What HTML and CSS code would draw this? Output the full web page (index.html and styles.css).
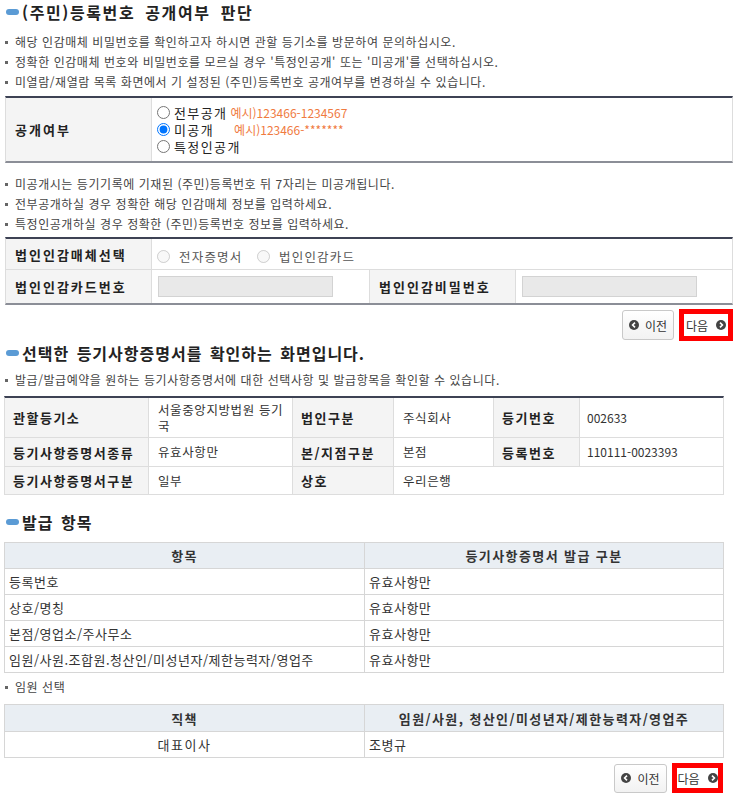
FILE: index.html
```html
<!DOCTYPE html>
<html lang="ko">
<head>
<meta charset="utf-8">
<title>등록번호 공개여부</title>
<link rel="stylesheet" href="styles.css">
</head>
<body>
<h2 class="title t1"><span class="pill"></span>(주민)등록번호 공개여부 판단</h2>
<ul class="notes n1">
  <li>해당 인감매체 비밀번호를 확인하고자 하시면 관할 등기소를 방문하여 문의하십시오.</li>
  <li>정확한 인감매체 번호와 비밀번호를 모르실 경우 '특정인공개' 또는 '미공개'를 선택하십시오.</li>
  <li>미열람/재열람 목록 화면에서 기 설정된 (주민)등록번호 공개여부를 변경하실 수 있습니다.</li>
</ul>
<table class="form f1">
  <colgroup><col class="c146"><col></colgroup>
  <tr class="r63">
    <th>공개여부</th>
    <td class="radios">
      <label class="rline"><input type="radio" name="open">전부공개<span class="ex ex1">예시)123466-1234567</span></label>
      <label class="rline"><input type="radio" name="open" checked>미공개<span class="ex ex2">예시)123466-*******</span></label>
      <label class="rline"><input type="radio" name="open">특정인공개</label>
    </td>
  </tr>
</table>
<ul class="notes n2">
  <li>미공개시는 등기기록에 기재된 (주민)등록번호 뒤 7자리는 미공개됩니다.</li>
  <li>전부공개하실 경우 정확한 해당 인감매체 정보를 입력하세요.</li>
  <li>특정인공개하실 경우 정확한 (주민)등록번호 정보를 입력하세요.</li>
</ul>
<table class="form f2">
  <colgroup><col class="c146"><col class="c217"><col class="c147"><col></colgroup>
  <tr class="r31">
    <th>법인인감매체선택</th>
    <td colspan="3" class="dis">
      <label class="dline"><input type="radio" name="media" disabled>전자증명서</label>
      <label class="dline"><input type="radio" name="media" disabled>법인인감카드</label>
    </td>
  </tr>
  <tr class="r33">
    <th>법인인감카드번호</th>
    <td><input type="text" class="field" disabled></td>
    <th class="bl">법인인감비밀번호</th>
    <td><input type="text" class="field" disabled></td>
  </tr>
</table>
<div class="btns b1">
  <span class="btn prev"><svg width="10" height="10" viewBox="0 0 10 10"><circle cx="5" cy="5" r="5" fill="#444"/><polyline points="6,2.6 3.6,5 6,7.4" fill="none" stroke="#fff" stroke-width="1.6"/></svg>이전</span>
  <span class="btn next">다음<svg width="10" height="10" viewBox="0 0 10 10"><circle cx="5" cy="5" r="5" fill="#444"/><polyline points="4,2.6 6.4,5 4,7.4" fill="none" stroke="#fff" stroke-width="1.6"/></svg></span>
</div>

<h2 class="title t2"><span class="pill"></span>선택한 등기사항증명서를 확인하는 화면입니다.</h2>
<ul class="notes n3">
  <li>발급/발급예약을 원하는 등기사항증명서에 대한 선택사항 및 발급항목을 확인할 수 있습니다.</li>
</ul>
<table class="info">
  <colgroup><col class="c144"><col class="c144"><col class="c101"><col class="c100"><col class="c86"><col></colgroup>
  <tr class="r40">
    <th>관할등기소</th><td>서울중앙지방법원 등기국</td>
    <th>법인구분</th><td>주식회사</td>
    <th>등기번호</th><td class="num">002633</td>
  </tr>
  <tr class="r29">
    <th>등기사항증명서종류</th><td>유효사항만</td>
    <th>본/지점구분</th><td>본점</td>
    <th>등록번호</th><td class="num">110111-0023393</td>
  </tr>
  <tr class="r28">
    <th>등기사항증명서구분</th><td>일부</td>
    <th>상호</th><td colspan="3">우리은행</td>
  </tr>
</table>

<h2 class="title t3"><span class="pill"></span>발급 항목</h2>
<table class="grid g1">
  <colgroup><col class="c360"><col></colgroup>
  <tr class="h26"><th>항목</th><th>등기사항증명서 발급 구분</th></tr>
  <tr class="h26"><td>등록번호</td><td>유효사항만</td></tr>
  <tr class="h26"><td>상호/명칭</td><td>유효사항만</td></tr>
  <tr class="h26"><td>본점/영업소/주사무소</td><td>유효사항만</td></tr>
  <tr class="h26"><td>임원/사원.조합원.청산인/미성년자/제한능력자/영업주</td><td>유효사항만</td></tr>
</table>
<ul class="notes n4">
  <li>임원 선택</li>
</ul>
<table class="grid g2">
  <colgroup><col class="c360"><col></colgroup>
  <tr class="h27"><th>직책</th><th>임원/사원, 청산인/미성년자/제한능력자/영업주</th></tr>
  <tr class="h26"><td class="center">대표이사</td><td>조병규</td></tr>
</table>
<div class="btns b2">
  <span class="btn prev"><svg width="10" height="10" viewBox="0 0 10 10"><circle cx="5" cy="5" r="5" fill="#444"/><polyline points="6,2.6 3.6,5 6,7.4" fill="none" stroke="#fff" stroke-width="1.6"/></svg>이전</span>
  <span class="btn next">다음<svg width="10" height="10" viewBox="0 0 10 10"><circle cx="5" cy="5" r="5" fill="#444"/><polyline points="4,2.6 6.4,5 4,7.4" fill="none" stroke="#fff" stroke-width="1.6"/></svg></span>
</div>
</body>
</html>
```

FILE: styles.css
```css
* { box-sizing: border-box; }
body {
  margin: 0;
  width: 738px;
  background: #fff;
  color: #333;
  font-family: "Noto Sans CJK KR", "Noto Sans", sans-serif;
}

/* section titles */
.title {
  display: flex;
  align-items: center;
  height: 22px;
  margin: 0;
  padding-left: 6px;
  font-size: 16px;
  font-weight: 700;
  color: #222;
  letter-spacing: 1px;
  word-spacing: 2px;
  white-space: nowrap;
}
.pill {
  flex: none;
  width: 13px;
  height: 6px;
  border-radius: 3px;
  background: #5b9bd5;
  margin-right: 3px;
}
.t1 { margin-top: 1px; letter-spacing: 1.6px; word-spacing: 4px; }
.t2 { margin-top: 1px; }
.t3 { margin-top: 16px; }

/* bullet notes */
.notes {
  list-style: none;
  margin: 0;
  padding: 0 0 0 5px;
  font-size: 12px;
  color: #444;
  letter-spacing: 0.55px;
}
.notes li {
  display: flex;
  align-items: center;
  height: 20px;
  line-height: 20px;
  white-space: nowrap;
}
.notes li::before {
  content: "";
  flex: none;
  width: 3px;
  height: 3px;
  background: #666;
  margin-right: 7px;
}
.n1 { margin-top: 9px; }
.n2 { margin-top: 11px; }
.n3 { margin-top: 6px; }
.n4 { margin-top: 4px; }

/* shared table */
table {
  border-collapse: separate;
  border-spacing: 0;
  table-layout: fixed;
}
th, td { padding: 0; }

.c146 { width: 146px; }
.c217 { width: 217px; }
.c147 { width: 147px; }
.c144 { width: 144px; }
.c101 { width: 101px; }
.c100 { width: 100px; }
.c86 { width: 86px; }
.c360 { width: 360px; }

.r63 { height: 63px; }
.r31 { height: 31px; }
.r33 { height: 33px; }
.r40 { height: 40px; }
.r29 { height: 29px; }
.r28 { height: 28px; }
.h26 { height: 26px; }
.h27 { height: 27px; }

/* form tables */
.form {
  width: 728px;
  margin-left: 5px;
  border-top: 2px solid #3d4254;
  border-bottom: 2px solid #8b8e97;
  border-left: 1px solid #ddd;
  border-right: 1px solid #ddd;
}
.f1 { margin-top: 4px; }
.f2 { margin-top: 3px; }
.form th {
  background: #f4f4f4;
  text-align: left;
  font-size: 13px;
  font-weight: 700;
  letter-spacing: 2px;
  color: #222;
  padding-left: 9px;
  border-right: 1px solid #ddd;
  white-space: nowrap;
}
.form th.bl { border-left: 1px solid #ddd; }
.form td { padding-left: 5px; }
.f2 .r31 th, .f2 .r31 td { border-bottom: 1px solid #ddd; }

.rline {
  display: flex;
  align-items: center;
  height: 17px;
  line-height: 17px;
  font-size: 13px;
  letter-spacing: 1.4px;
  color: #222;
  white-space: nowrap;
}
input[type="radio"] {
  width: 13px;
  height: 13px;
  margin: 0 4px 0 0;
  flex: none;
}
.ex {
  font-size: 12px;
  line-height: 17px;
  color: #f07b3f;
  letter-spacing: 0;
}
.ex1 { margin-left: 3px; }
.ex2 { margin-left: 20px; }

.dis { padding-left: 6px; }
.dline {
  display: inline-flex;
  align-items: center;
  font-size: 12.5px;
  color: #555;
  letter-spacing: 1.2px;
  margin-right: 10px;
  vertical-align: middle;
}
.dline input[type="radio"] { margin-right: 9px; }

.field {
  display: block;
  width: 175px;
  height: 21px;
  margin-left: 1px;
  background: #e9e9e9;
  border: 1px solid #d3d3d3;
}

/* buttons */
.btns {
  display: flex;
  justify-content: flex-end;
  align-items: center;
  gap: 5px;
  height: 32px;
}
.b1 { margin-top: 4px; padding-right: 5px; }
.b2 { margin-top: 5px; padding-right: 15px; height: 30px; }
.btn {
  display: flex;
  align-items: center;
  justify-content: center;
  gap: 6px;
  height: 30px;
  font-size: 12px;
  color: #333;
  background: linear-gradient(#fff, #f2f2f2);
  border: 1px solid #c9c9c9;
  border-radius: 3px;
}
.prev { width: 52px; }
.next {
  width: 54px;
  height: 32px;
  background: #fff;
  border: 5px solid #ff0000;
  border-radius: 0;
  gap: 8px;
}
.b2 .prev { width: 53px; height: 29px; }
.b2 .next { width: 51px; height: 30px; }

/* info table */
.info {
  width: 720px;
  margin: 6px 0 0 4px;
  border-top: 2px solid #3d4254;
  border-left: 1px solid #ddd;
  border-right: 1px solid #ddd;
}
.info th, .info td {
  border-bottom: 1px solid #ddd;
  border-right: 1px solid #ddd;
  font-size: 12.5px;
  text-align: left;
  vertical-align: middle;
}
.info th:last-child, .info td:last-child { border-right: none; }
.info th {
  background: #f4f4f4;
  font-size: 13px;
  font-weight: 700;
  letter-spacing: 1.5px;
  color: #222;
  padding-left: 8px;
  white-space: nowrap;
}
.info td {
  color: #333;
  padding: 0 6px 0 9px;
  line-height: 16px;
  letter-spacing: 0.6px;
}
.info td.num { padding-left: 7px; font-size: 12px; letter-spacing: 0; }

/* grid tables */
.grid {
  width: 720px;
  margin-left: 4px;
  border: 1px solid #d6d6d6;
  border-bottom: none;
}
.g1 { margin-top: 9px; }
.g2 { margin-top: 7px; }
.grid th, .grid td {
  border-bottom: 1px solid #d6d6d6;
  font-size: 13px;
  vertical-align: middle;
  white-space: nowrap;
}
.grid th:first-child, .grid td:first-child { border-right: 1px solid #d6d6d6; }
.grid th {
  background: #e9eef3;
  font-weight: 700;
  text-align: center;
  color: #333;
  letter-spacing: 1.4px;
}
.grid td {
  text-align: left;
  padding-left: 4px;
  color: #333;
  letter-spacing: 0.5px;
}
.grid td.center { text-align: center; padding-left: 0; letter-spacing: 1.5px; }
```
